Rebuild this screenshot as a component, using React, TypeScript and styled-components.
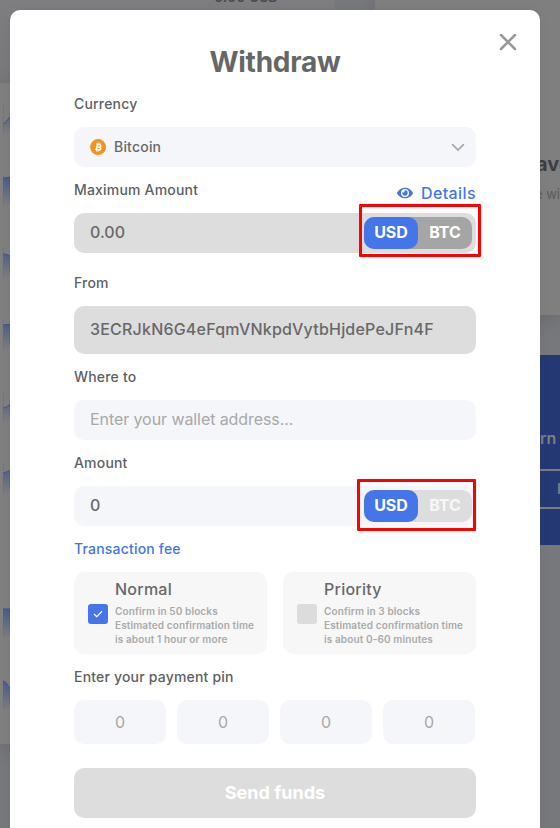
import React from "react";
import styled, { createGlobalStyle } from "styled-components";

const GlobalStyle = createGlobalStyle`
  *, *::before, *::after { box-sizing: border-box; }
  body { margin: 0; overflow: hidden; font-family: Inter, "Liberation Sans", sans-serif; }
`;

const Stage = styled.div`
  position: relative;
  width: 560px;
  height: 828px;
  overflow: hidden;
  background: #77787b;
`;

const Dashboard = styled.div`
  display: grid;
  grid-template-columns: 335px 185px;
  column-gap: 40px;
  height: 828px;
`;

const MainColumn = styled.div`
  display: flex;
  flex-direction: column;
`;

const BalanceBar = styled.div`
  height: 83px;
  padding-left: 214px;
  background: linear-gradient(#7e7e80, #78787b);
  color: #4b4b4d;
  font-size: 14px;
  font-weight: 600;
  line-height: 17px;
`;

const BalanceText = styled.div`
  margin-top: -12px;
`;

const AssetList = styled.div`
  height: 661px;
  padding-left: 3px;
  background: #7f7f7f;
  box-shadow: 0 4px 20px rgba(0, 0, 0, 0.12);
`;

const AssetRow = styled.div`
  display: flex;
  align-items: center;
  height: 72px;
`;

const SideColumn = styled.div`
  display: flex;
  flex-direction: column;
  gap: 40px;
`;

const SavingsCard = styled.div`
  height: 315px;
  padding: 152px 0 0 148px;
  background: #7f7f7f;
  box-shadow: 0 4px 20px rgba(0, 0, 0, 0.12);
  white-space: nowrap;
`;

const SavingsTitle = styled.div`
  color: #3e3e40;
  font-size: 20px;
  font-weight: 700;
  line-height: 24px;
`;

const SavingsText = styled.div`
  margin-top: 10px;
  padding-left: 12px;
  color: #5a5a5a;
  font-size: 13px;
  line-height: 16px;
`;

const EarnCard = styled.div`
  height: 190px;
  padding-top: 74px;
  background: #243974;
  color: #7c7e88;
  white-space: nowrap;
`;

const EarnTitle = styled.div`
  padding-left: 146px;
  font-size: 16px;
  font-weight: 600;
  line-height: 18px;
`;

const EarnAction = styled.div`
  height: 40px;
  margin-top: 22px;
  padding-left: 182px;
  border: solid #7d7d7f;
  border-width: 2px 0;
  font-size: 14px;
  font-weight: 600;
  line-height: 36px;
`;

const Modal = styled.div`
  position: absolute;
  top: 10px;
  left: 10px;
  display: flex;
  flex-direction: column;
  width: 530px;
  height: 840px;
  padding: 32px 64px 0;
  border-radius: 10px;
  background: #fff;
  color: #666;
  box-shadow: 0 0 12px rgba(0, 0, 0, 0.05);
`;

const CloseButton = styled.button`
  position: absolute;
  top: 22px;
  right: 22px;
  display: flex;
  padding: 0;
  border: 0;
  background: none;
  color: #999;
`;

const Title = styled.h1`
  margin: 0 0 12px;
  font-size: 28px;
  font-weight: 700;
  letter-spacing: -0.25px;
  line-height: 40px;
  text-align: center;
`;

const LabelRow = styled.div<{ $gap?: number }>`
  display: flex;
  align-items: center;
  justify-content: space-between;
  height: 20px;
  margin-top: ${(p) => p.$gap ?? 13}px;
  margin-bottom: 13px;
`;

const Label = styled.label<{ $accent?: boolean }>`
  color: ${(p) => (p.$accent ? "#4374e8" : "#5e5f63")};
  font-size: 14px;
  font-weight: 500;
  letter-spacing: 0.19px;
  line-height: 20px;
`;

const DetailsLink = styled.a`
  display: flex;
  align-items: center;
  gap: 8px;
  margin-top: 6px;
  color: #4475e9;
  font-size: 16px;
  font-weight: 500;
  letter-spacing: 0.4px;
`;

const Field = styled.div<{ $disabled?: boolean; $height?: number; $light?: boolean }>`
  display: flex;
  flex: none;
  align-items: center;
  height: ${(p) => p.$height ?? 40}px;
  padding: 0 4px 0 16px;
  border-radius: 10px;
  background: ${(p) => (p.$disabled ? "#ddd" : "#f4f6fa")};
  color: ${(p) => (p.$light ? "#a8a8a8" : "#686868")};
  font-size: 16px;
  font-weight: ${(p) => (p.$light ? 400 : 500)};
`;

const FieldText = styled.span<{ $spacing?: number; $size?: number }>`
  flex: 1;
  padding-bottom: 2px;
  font-size: ${(p) => p.$size ?? 16}px;
  letter-spacing: ${(p) => p.$spacing ?? 0}px;
`;

const CoinIcon = styled.svg`
  margin-right: 7px;
`;

const Chevron = styled.svg`
  margin-right: 7px;
`;

const Toggle = styled.div<{ $track: string }>`
  position: relative;
  display: flex;
  width: 108px;
  height: 32px;
  border-radius: 10px;
  background: ${(p) => p.$track};
`;

const ToggleOption = styled.div<{ $active?: boolean; $dim?: boolean }>`
  width: 54px;
  border-radius: 10px;
  background: ${(p) => (p.$active ? "#4475e9" : "transparent")};
  color: ${(p) => (p.$dim ? "#f7f7f7" : "#fff")};
  font-size: 16px;
  font-weight: 700;
  line-height: 31px;
  text-align: center;
`;

const Highlight = styled.div<{ $top: number; $right: number; $bottom: number; $left: number }>`
  position: absolute;
  top: ${(p) => -p.$top}px;
  right: ${(p) => -p.$right}px;
  bottom: ${(p) => -p.$bottom}px;
  left: ${(p) => -p.$left}px;
  border: 3px solid #f00;
  border-radius: 1px;
`;

const FeeOptions = styled.div`
  display: flex;
  gap: 16px;
`;

const FeeCard = styled.div`
  display: flex;
  align-items: center;
  width: 193px;
  height: 82px;
  padding-left: 14px;
  border-radius: 10px;
  background: #f7f7f7;
`;

const Checkbox = styled.div<{ $checked?: boolean }>`
  display: flex;
  flex: none;
  align-items: center;
  justify-content: center;
  width: 20px;
  height: 20px;
  margin: 2px 7px 0 0;
  border-radius: 3px;
  background: ${(p) => (p.$checked ? "#4475e9" : "#dcdcdc")};
`;

const FeeName = styled.div`
  height: 20px;
  margin-bottom: 4px;
  color: #686868;
  font-size: 16px;
  font-weight: 500;
  letter-spacing: 0.25px;
  line-height: 18px;
`;

const FeeNote = styled.div`
  height: 14px;
  color: #aaa;
  font-size: 10px;
  font-weight: 600;
  letter-spacing: 0.12px;
  line-height: 14px;
  white-space: nowrap;
`;

const PinRow = styled.div`
  display: flex;
  gap: 11px;
  margin-bottom: 24px;
`;

const PinBox = styled.div`
  width: 92px;
  height: 44px;
  border-radius: 10px;
  background: #f4f6fa;
  color: #a8a8a8;
  font-size: 16px;
  line-height: 44px;
  text-align: center;
`;

const SendButton = styled.button`
  flex: none;
  height: 50px;
  padding: 0;
  border: 0;
  border-radius: 10px;
  background: #ddd;
  color: #fff;
  font: 700 18px/48px Inter, "Liberation Sans", sans-serif;
`;

const sparklines: (string | null)[] = [
  "M0 20 C3 20 4 14 9 12",
  "M0 2 L9 1",
  "M0 6 C3 6 5 7 9 9",
  "M0 5 L9 4",
  "M0 16 C3 16 6 13 9 11",
  "M0 9 C4 8 5 7 9 6",
  null,
  "M0 1 L9 1",
  "M0 1 C3 1 5 6 9 11",
];

function Sparkline({ line }: { line: string }) {
  return (
    <svg width="9" height="30" viewBox="0 0 9 30">
      <defs>
        <linearGradient id="spark" x1="0" y1="0" x2="0" y2="30" gradientUnits="userSpaceOnUse">
          <stop offset="0" stopColor="#465a90" />
          <stop offset="1" stopColor="#7f7f7f" />
        </linearGradient>
      </defs>
      <path d={`${line} V29 H0 Z`} fill="url(#spark)" />
      <path d={line} fill="none" stroke="#3b5494" />
      <path d="M.5 0 V29.5" fill="none" stroke="#666" strokeDasharray="1 1" opacity=".6" />
    </svg>
  );
}

function CurrencyToggle({ track, dim, children }: { track: string; dim?: boolean; children: React.ReactNode }) {
  return (
    <Toggle $track={track}>
      <ToggleOption $active>USD</ToggleOption>
      <ToggleOption $dim={dim}>BTC</ToggleOption>
      {children}
    </Toggle>
  );
}

function FeeOption({ name, notes, checked }: { name: string; notes: string[]; checked?: boolean }) {
  return (
    <FeeCard>
      <Checkbox $checked={checked}>
        {checked && (
          <svg width="10" height="8" viewBox="0 0 10 8">
            <path d="M1 4 L3.8 6.7 L9 1.2" fill="none" stroke="#fff" strokeWidth="1.3" />
          </svg>
        )}
      </Checkbox>
      <div>
        <FeeName>{name}</FeeName>
        {notes.map((note) => (
          <FeeNote key={note}>{note}</FeeNote>
        ))}
      </div>
    </FeeCard>
  );
}

export default function App() {
  return (
    <Stage>
      <GlobalStyle />
      <Dashboard>
        <MainColumn>
          <BalanceBar>
            <BalanceText>0.00 USD</BalanceText>
          </BalanceBar>
          <AssetList>
            {sparklines.map((line, i) => (
              <AssetRow key={i}>{line && <Sparkline line={line} />}</AssetRow>
            ))}
          </AssetList>
        </MainColumn>
        <SideColumn>
          <SavingsCard>
            <SavingsTitle>Save</SavingsTitle>
            <SavingsText>e wi</SavingsText>
          </SavingsCard>
          <EarnCard>
            <EarnTitle>Earn</EarnTitle>
            <EarnAction>I</EarnAction>
          </EarnCard>
        </SideColumn>
      </Dashboard>

      <Modal>
        <CloseButton aria-label="Close">
          <svg width="20" height="20" viewBox="0 0 20 20">
            <path d="M3 3 L17 17 M17 3 L3 17" stroke="currentColor" strokeWidth="2.5" strokeLinecap="round" />
          </svg>
        </CloseButton>
        <Title>Withdraw</Title>

        <LabelRow $gap={0}>
          <Label>Currency</Label>
        </LabelRow>
        <Field>
          <CoinIcon width="17" height="17" viewBox="0 0 17 17">
            <circle cx="8.1" cy="8.1" r="8" fill="#f7931a" />
            <g transform="translate(0 -.8) rotate(13 8.2 8.9)" fill="none" stroke="#fff">
              <path
                d="M6.9 6.2 H8.9 C11 6.2 11 8.8 8.9 8.8 H6.9 M8.9 8.8 C11.5 8.8 11.5 11.6 8.9 11.6 H6.9 M7 6.2 V11.6 M5.5 6.2 H7 M5.5 11.6 H7"
                strokeWidth="1.5"
              />
              <path d="M7.3 4.3 V6 M9 4.3 V6 M7.3 11.8 V13.5 M9 11.8 V13.5" strokeWidth="1" />
            </g>
          </CoinIcon>
          <FieldText $size={14} $spacing={0.2}>Bitcoin</FieldText>
          <Chevron width="14" height="9" viewBox="0 0 14 9">
            <path d="M1.6 1.6 L7 7 L12.4 1.6" fill="none" stroke="#a8a8a8" strokeWidth="1.7" strokeLinecap="round" />
          </Chevron>
        </Field>

        <LabelRow>
          <Label>Maximum Amount</Label>
          <DetailsLink>
            <svg width="16" height="12" viewBox="0 0 576 432">
              <path
                fill="currentColor"
                fillRule="evenodd"
                d="M572 201 C518 95 410 24 288 24 S58 95 4 201 a32 32 0 0 0 0 29 C58 337 166 408 288 408 S518 337 572 231 a32 32 0 0 0 0-30 Z M288 360 a144 144 0 1 1 0-288 a144 144 0 0 1 0 288 Z M288 120 a95 95 0 0 0-25 4 a48 48 0 0 1-67 67 A96 96 0 1 0 288 120 Z"
              />
            </svg>
            Details
          </DetailsLink>
        </LabelRow>
        <Field $disabled>
          <FieldText>0.00</FieldText>
          <CurrencyToggle track="#a5a5a5">
            <Highlight $top={13} $right={9} $bottom={8} $left={5} />
          </CurrencyToggle>
        </Field>

        <LabelRow $gap={20}>
          <Label>From</Label>
        </LabelRow>
        <Field $disabled $height={48}>
          <FieldText $spacing={0.2}>3ECRJkN6G4eFqmVNkpdVytbHjdePeJFn4F</FieldText>
        </Field>

        <LabelRow>
          <Label>Where to</Label>
        </LabelRow>
        <Field $light>
          <FieldText $spacing={-0.08}>Enter your wallet address...</FieldText>
        </Field>

        <LabelRow>
          <Label>Amount</Label>
        </LabelRow>
        <Field>
          <FieldText>0</FieldText>
          <CurrencyToggle track="#ddd" dim>
            <Highlight $top={11} $right={4} $bottom={9} $left={7} />
          </CurrencyToggle>
        </Field>

        <LabelRow>
          <Label $accent>Transaction fee</Label>
        </LabelRow>
        <FeeOptions>
          <FeeOption
            name="Normal"
            checked
            notes={["Confirm in 50 blocks", "Estimated confirmation time", "is about 1 hour or more"]}
          />
          <FeeOption
            name="Priority"
            notes={["Confirm in 3 blocks", "Estimated confirmation time", "is about 0-60 minutes"]}
          />
        </FeeOptions>

        <LabelRow>
          <Label>Enter your payment pin</Label>
        </LabelRow>
        <PinRow>
          {[0, 1, 2, 3].map((i) => (
            <PinBox key={i}>0</PinBox>
          ))}
        </PinRow>
        <SendButton>Send funds</SendButton>
      </Modal>
    </Stage>
  );
}
